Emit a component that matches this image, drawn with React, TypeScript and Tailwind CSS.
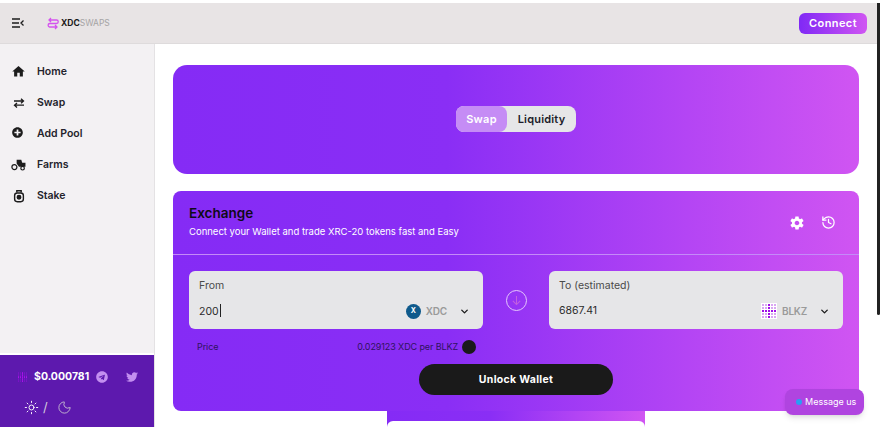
import { ChevronDown, History, Moon, Sun } from "lucide-react";
import { FaPlusCircle, FaTelegram, FaTwitter } from "react-icons/fa";
import { IoMdSettings } from "react-icons/io";
import { MdHome } from "react-icons/md";

const gradient = "bg-[linear-gradient(90deg,#852bf5_0%,#8a2ef5_40%,#b445f4_75%,#d055f2_100%)]";

function SwapIcon() {
  return (
    <svg viewBox="0 0 12 10" className="h-[10px] w-[12px]" fill="none" stroke="#1c1c1c" strokeWidth="1.3">
      <path d="M1 3h9.5M8 .8L10.5 3 8 5.2" />
      <path d="M11 7.2H1.5M4 5L1.5 7.2 4 9.4" />
    </svg>
  );
}

function FarmIcon() {
  return (
    <svg viewBox="0 0 16 14" className="h-[13px] w-[15px]" fill="#1c1c1c">
      <path d="M6 2h5l1 3h3.5v4.5H8.5L6 6V2z" />
      <circle cx="3.6" cy="9.8" r="2.7" fill="none" stroke="#1c1c1c" strokeWidth="1.3" />
      <circle cx="12.4" cy="11" r="1.9" fill="#f3f1f3" stroke="#1c1c1c" strokeWidth="1.3" />
    </svg>
  );
}

function StakeIcon() {
  return (
    <svg viewBox="0 0 16 16" className="h-[14px] w-[14px]" fill="none" stroke="#1c1c1c" strokeWidth="1.6">
      <rect x="3" y="4.5" width="10" height="10" rx="3" />
      <path d="M5.5 4V2h5v2" />
      <circle cx="8" cy="9.5" r="2" fill="#1c1c1c" />
    </svg>
  );
}

const navItems = [
  { name: "Home", icon: <MdHome className="h-[15px] w-[15px] text-[#1c1c1c]" /> },
  { name: "Swap", icon: <SwapIcon /> },
  { name: "Add Pool", icon: <FaPlusCircle className="mr-[3px] h-[11px] w-[11px] -translate-y-px text-[#1c1c1c]" /> },
  { name: "Farms", icon: <FarmIcon /> },
  { name: "Stake", icon: <StakeIcon /> },
];

function BlkzDots() {
  const cells = Array.from({ length: 25 });
  return (
    <div className="grid h-[16px] w-[16px] grid-cols-5 gap-px bg-white p-px">
      {cells.map((_, i) => (
        <span key={i} className={i % 5 === 2 || (i > 9 && i < 15) ? "bg-[#a010e8]" : "bg-[#d9a6f3]"} />
      ))}
    </div>
  );
}

function PriceDots() {
  const cells = Array.from({ length: 25 });
  return (
    <div className="grid h-[10px] w-[9px] grid-cols-5 gap-[0.5px]">
      {cells.map((_, i) => (
        <span key={i} className={i % 5 === 2 || (i > 9 && i < 15) ? "rounded-full bg-[#b010f0]" : "rounded-full bg-[#7d14c8]"} />
      ))}
    </div>
  );
}

function TokenBox({ label, value, token, icon, caret }: { label: string; value: string; token: string; icon: React.ReactNode; caret?: boolean }) {
  return (
    <div className="flex h-[58px] w-[294px] flex-col rounded-[6px] bg-[#e6e6e8] pl-[10px] pr-[13px] pt-[8px]">
      <span className="text-[10.5px] leading-[13px] text-[#4a4a4a]">{label}</span>
      <div className="mt-[8px] flex h-[22px] items-center">
        <span className="flex-1 text-[10.5px] text-[#2b2b2b]">
          {value}
          {caret && <span className="ml-px inline-block h-[13px] w-px translate-y-[2px] bg-[#222]" />}
        </span>
        {icon}
        <span className="ml-[5px] text-[10px] font-semibold tracking-[-0.2px] text-[#9a9a9a]">{token}</span>
        <ChevronDown className="ml-[12px] h-[11px] w-[11px] text-[#1c1c1c]" strokeWidth={3} />
      </div>
    </div>
  );
}

export default function App() {
  return (
    <div className="relative flex h-[427px] w-[880px] flex-col overflow-hidden bg-white pt-[3px] font-['Inter',sans-serif]">
      <header className="flex h-[41px] shrink-0 items-center border-b border-[#dedbdc] bg-[#e8e4e5] pl-[12px] pr-[13px]">
        <svg viewBox="0 0 12 10" className="h-[10px] w-[12px]" fill="none" stroke="#1c1c1c" strokeWidth="1.3">
          <path d="M0 1h8M0 5h7M0 9h8M11.5 2.5L9 5l2.5 2.5" />
        </svg>
        <svg viewBox="0 0 12 14" className="ml-[23px] h-[15px] w-[12px]" fill="none" stroke="#d453ee" strokeWidth="1.3">
          <path d="M2 3.5h7.5a1.7 1.7 0 010 3.5H2.5a1.8 1.8 0 000 3.5H10M4 1.5L2 3.5l2 2M8 8.5l2 2-2 2" />
        </svg>
        <span className="ml-[2px] text-[8.5px] font-bold text-[#1a1a1a]">XDC</span>
        <span className="text-[8.5px] text-[#a5a3a4]">SWAPS</span>
        <button className="ml-auto h-[21px] w-[68px] rounded-[6px] bg-[linear-gradient(90deg,#8029f5,#d055f2)] text-[11px] font-semibold tracking-[0.4px] text-white">
          Connect
        </button>
      </header>

      <div className="flex min-h-0 flex-1">
        <aside className="flex w-[155px] shrink-0 flex-col border-r border-[#e4e2e4] bg-[#f3f1f3]">
          <nav className="flex flex-1 flex-col pt-[12px]">
            {navItems.map((item) => (
              <div key={item.name} className="flex h-[31px] items-center">
                <span className="flex w-[37px] justify-center">
                  <span className="flex w-[17px] justify-center">{item.icon}</span>
                </span>
                <span className="text-[10.5px] font-semibold text-[#23232b]">{item.name}</span>
              </div>
            ))}
          </nav>
          <div className="h-[74px] border-t-2 border-white bg-[#5d19ae] pt-[14px]">
            <div className="flex h-[16px] items-center pl-[18px]">
              <PriceDots />
              <span className="ml-[7px] text-[10.5px] font-bold text-white">$0.000781</span>
              <FaTelegram className="ml-[7px] h-[12px] w-[12px] text-[#c38ff0]" />
              <FaTwitter className="ml-[18px] h-[12px] w-[12px] text-[#c38ff0]" />
            </div>
            <div className="mt-[15px] flex items-center pl-[24px]">
              <Sun className="h-[15px] w-[15px] text-white" strokeWidth={1.5} />
              <span className="ml-[4px] text-[13px] leading-[15px] text-[#d2c8dc]">/</span>
              <Moon className="ml-[9px] h-[15px] w-[15px] text-[#c2b6cf]" strokeWidth={1.5} />
            </div>
          </div>
        </aside>

        <main className="flex min-w-0 flex-1 flex-col pl-[18px] pr-[21px] pt-[21px]">
          <section className={`flex h-[109px] shrink-0 items-center justify-center rounded-[14px] pb-px ${gradient}`}>
            <div className="flex h-[26px] w-[120px] rounded-[8px] bg-[#e6e6e8] text-[11px] font-semibold">
              <span className="flex w-[51px] items-center justify-center rounded-[8px] bg-[#c58cf5] tracking-[0.3px] text-white">Swap</span>
              <span className="flex flex-1 items-center justify-center tracking-[0.2px] text-[#1c1c2a]">Liquidity</span>
            </div>
          </section>

          <section className={`mt-[17px] h-[220px] shrink-0 rounded-[8px] ${gradient}`}>
            <div className="flex h-[64px] items-center border-b border-[#c48af8] pl-[16px] pr-[23px]">
              <div>
                <h1 className="-translate-y-px text-[13.5px] font-semibold leading-[18px] text-[#0f0a18]">Exchange</h1>
                <p className="mt-[2px] text-[9.5px] text-white">Connect your Wallet and trade XRC-20 tokens fast and Easy</p>
              </div>
              <IoMdSettings className="ml-auto h-[16px] w-[16px] text-white" />
              <History className="ml-[16px] h-[15px] w-[15px] text-white" strokeWidth={2} />
            </div>

            <div className="flex items-center px-[16px] pt-[16px]">
              <TokenBox
                label="From"
                value="200"
                token="XDC"
                caret
                icon={
                  <span className="flex h-[15px] w-[15px] items-center justify-center rounded-full bg-[#0f5a8c] text-[7px] font-bold text-white">X</span>
                }
              />
              <div className="flex flex-1 justify-center">
                <div className="flex h-[21px] w-[21px] items-center justify-center rounded-full border border-[#e5c8fb]">
                  <svg viewBox="0 0 12 12" className="h-[11px] w-[11px]" fill="none" stroke="#c25fe0" strokeWidth="1.1">
                    <path d="M6 1v9.5M2 6.5l4 4 4-4" />
                  </svg>
                </div>
              </div>
              <TokenBox label="To (estimated)" value="6867.41" token="BLKZ" icon={<BlkzDots />} />
            </div>

            <div className="ml-[24px] mt-[10px] flex h-[16px] w-[279px] items-center text-[9px] tracking-[-0.1px] text-[#2f1260]">
              <span>Price</span>
              <span className="ml-auto">0.029123 XDC per BLKZ</span>
              <span className="ml-[4px] h-[14px] w-[14px] rounded-full bg-[#1a1a1a]" />
            </div>

            <div className="mt-[9px] flex justify-center">
              <button className="h-[31px] w-[194px] rounded-full bg-[#1a1a1a] text-[10.5px] font-bold tracking-[0.3px] text-white">
                Unlock Wallet
              </button>
            </div>
          </section>

          <div className={`mx-auto h-[30px] w-[258px] shrink-0 pt-[10px] ${gradient}`}>
            <div className="h-[20px] rounded-t-[6px] bg-white" />
          </div>
        </main>
      </div>

      {/* scrollbar thumb of the embedded page */}
      <div className="absolute right-0 top-[3px] h-[312px] w-[3px] rounded-b-[2px] bg-[#222]" />

      <div className="absolute left-[785px] top-[389px] flex h-[26px] w-[79px] items-center rounded-[8px] bg-[#b044e0] pl-[11px] text-[9px] text-white shadow-md">
        <span className="h-[6px] w-[6px] rounded-full bg-[#2a9df4]" />
        <span className="ml-[3px]">Message us</span>
      </div>
    </div>
  );
}
